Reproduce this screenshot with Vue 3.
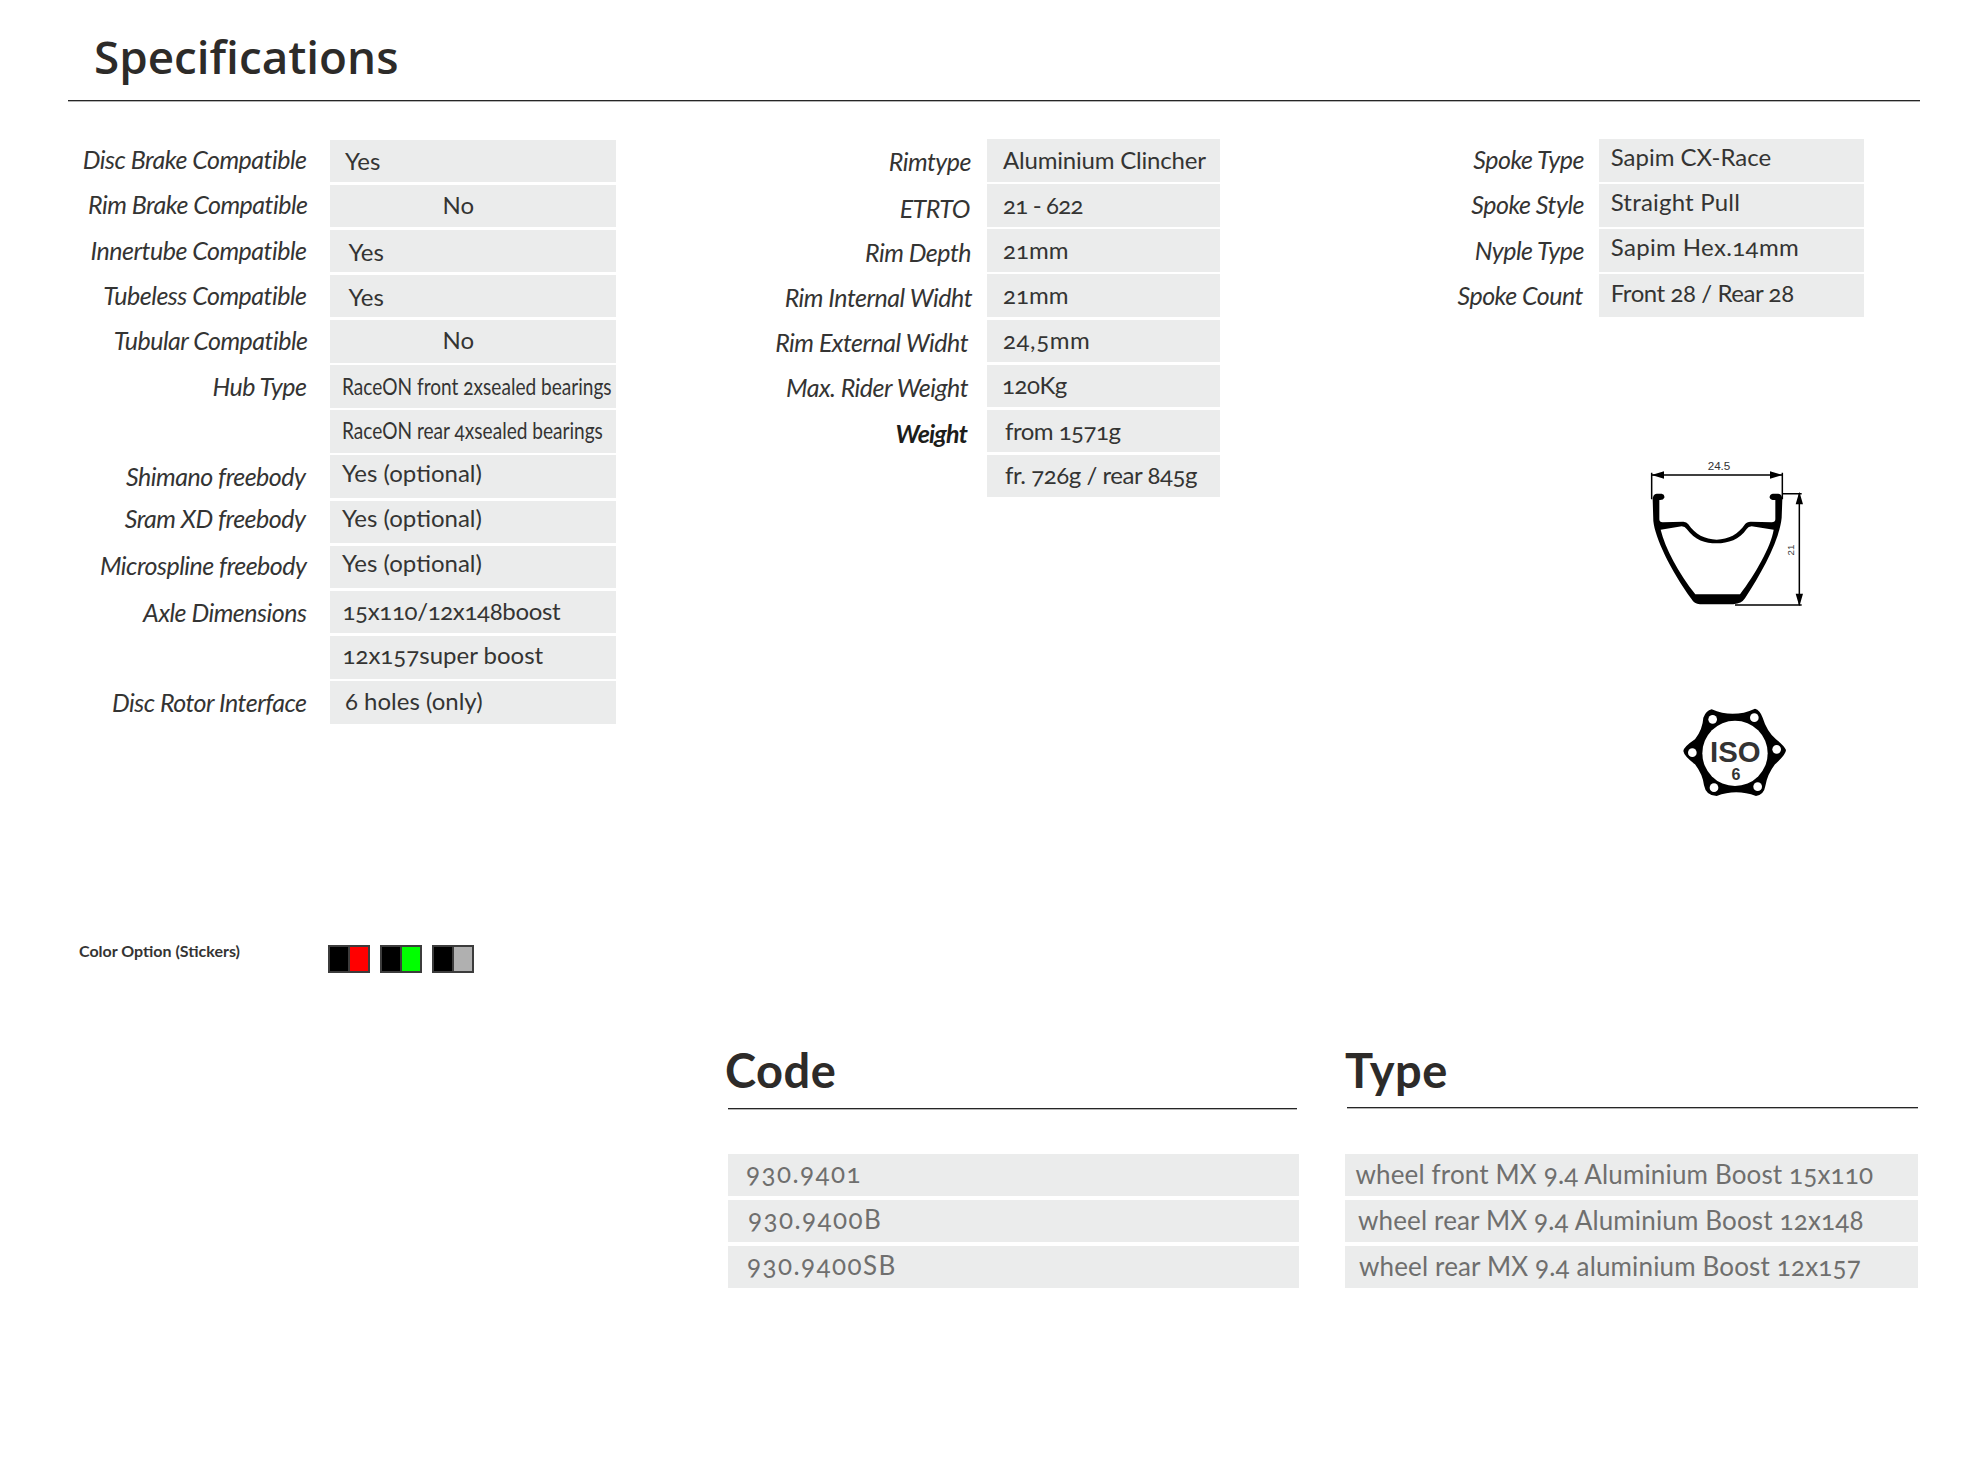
<script setup>
const pad = (b) => `${(b - 24.3).toFixed(1)}px`
const padLabel = (b) => `${(b - 24.7).toFixed(1)}px`
const left = [
  { l: 'Disc Brake Compatible', lb: 29.5, pr: 23, v: 'Yes', b: 30.5, pl: 15.5 },
  { l: 'Rim Brake Compatible', lb: 29, pr: 22, v: 'No', b: 30, pl: 113 },
  { l: 'Innertube Compatible', lb: 30, pr: 23, v: 'Yes', b: 31.7, pl: 19 },
  { l: 'Tubeless Compatible', lb: 30, pr: 23, v: 'Yes', b: 31, pl: 19 },
  { l: 'Tubular Compatible', lb: 29.7, pr: 22, v: 'No', b: 29.7, pl: 113 },
  { l: 'Hub Type', lb: 30.7, pr: 23, v: 'RaceON front 2xsealed bearings', b: 29.7, pl: 12.5, cond: true },
  { l: '', lb: 30, pr: 23, v: 'RaceON rear 4xsealed bearings', b: 29.3, pl: 12.5, cond: true },
  { l: 'Shimano freebody', lb: 30, pr: 24, v: 'Yes (optional)', b: 26.7, pl: 12.5 },
  { l: 'Sram XD freebody', lb: 26.7, pr: 24, v: 'Yes (optional)', b: 26.7, pl: 12.5 },
  { l: 'Microspline freebody', lb: 29, pr: 23, v: 'Yes (optional)', b: 26.7, pl: 12.5 },
  { l: 'Axle Dimensions', lb: 30.5, pr: 23, v: '15x110/12x148boost', b: 29.5, pl: 13, ls: -0.35 },
  { l: '', lb: 30, pr: 23, v: '12x157super boost', b: 28.3, pl: 13 },
  { l: 'Disc Rotor Interface', lb: 30.7, pr: 23, v: '6 holes (only)', b: 29, pl: 15.5 }
]
const middle = [
  { l: 'Rimtype', lb: 32, pr: 16, v: 'Aluminium Clincher', b: 30.3, pl: 16, ls: -0.2 },
  { l: 'ETRTO', lb: 33.2, pr: 17, v: '21 - 622', b: 30, pl: 16, ls: -0.8 },
  { l: 'Rim Depth', lb: 32, pr: 16, v: '21mm', b: 30, pl: 16 },
  { l: 'Rim Internal Widht', lb: 32.4, pr: 15, v: '21mm', b: 29.7, pl: 16 },
  { l: 'Rim External Widht', lb: 32, pr: 19, v: '24,5mm', b: 29.3, pl: 16, ls: 0.6 },
  { l: 'Max. Rider Weight', lb: 32.3, pr: 19, v: '120Kg', b: 30, pl: 15, ls: -0.5 },
  { l: 'Weight', lb: 33.2, pr: 20, v: 'from 1571g', b: 30.5, pl: 18, strong: true, ls: -0.5 },
  { l: '', lb: 30, pr: 20, v: 'fr. 726g / rear 845g', b: 29, pl: 18, ls: -0.45 }
]
const right = [
  { l: 'Spoke Type', lb: 29.3, pr: 15, v: 'Sapim CX-Race', b: 27.7, pl: 11.7 },
  { l: 'Spoke Style', lb: 29.6, pr: 15, v: 'Straight Pull', b: 27.3, pl: 11.7, ls: 0.2 },
  { l: 'Nyple Type', lb: 30, pr: 15, v: 'Sapim Hex.14mm', b: 26.7, pl: 11.7, ls: 0.36 },
  { l: 'Spoke Count', lb: 30, pr: 16, v: 'Front 28 / Rear 28', b: 28, pl: 11.7, ls: -0.42 }
]
const tables = [
  { cls: 'table-left', rows: left },
  { cls: 'table-middle', rows: middle },
  { cls: 'table-right', rows: right }
]
const swatches = ['#ff0000', '#00ff00', '#b0b0b0']
const codes = [
  { v: '930.9401', pl: 18 },
  { v: '930.9400B', pl: 20 },
  { v: '930.9400SB', pl: 19 }
]
const types = [
  { v: 'wheel front MX 9.4 Aluminium Boost 15x110', pl: 10.5 },
  { v: 'wheel rear MX 9.4 Aluminium Boost 12x148', pl: 13 },
  { v: 'wheel rear MX 9.4 aluminium Boost 12x157', pl: 14 }
]
</script>

<template>
  <div class="page">
    <header class="head">
      <h1>Specifications</h1>
    </header>

    <section class="specs">
      <div v-for="t in tables" :key="t.cls" class="table" :class="t.cls">
        <template v-for="(r, i) in t.rows" :key="i">
          <div class="label" :class="{ strong: r.strong }" :style="{ paddingTop: padLabel(r.lb), paddingRight: r.pr + 'px' }">{{ r.l }}</div>
          <div class="cell" :style="{ paddingTop: pad(r.b), paddingLeft: r.pl + 'px', letterSpacing: (r.ls || 0) + 'px' }">
            <span :class="{ cond: r.cond }">{{ r.v }}</span>
          </div>
        </template>
      </div>

      <div class="drawings">
        <svg class="rim" viewBox="0 0 600 510" width="200" height="170">
          <path fill="#000" fill-rule="evenodd" d="M98 145 Q98 130 110 128 L125 128 Q135 130 133 140 Q130 148 118 147 L118 205 Q118 214 128 214 L190 212 Q200 212 205 220 C225 250 255 266 290 266 C325 266 355 250 375 220 Q380 212 392 212 L455 214 Q466 214 466 205 L466 147 Q452 148 449 140 Q448 130 458 128 L475 128 Q487 130 487 145 L485 200 C478 270 425 365 375 442 Q365 458 340 460 L240 460 Q222 458 215 445 C150 355 105 260 100 210 Z M122 236 L185 226 Q195 226 200 234 C225 268 255 277 290 277 C325 277 358 266 380 234 Q385 226 395 226 L461 236 C452 290 405 370 360 430 L226 430 C175 365 135 290 122 236 Z" />
          <g stroke="#000" stroke-width="4.5" fill="none">
            <path d="M95 65 V145 M487 65 V145 M95 72 H487 M487 128 H545 M345 462 H545 M538 128 V462" />
          </g>
          <g fill="#000">
            <path d="M95 72 L132 61 V83 Z M487 72 L450 61 V83 Z M538 122 L527 160 H549 Z M538 466 L527 428 H549 Z" />
          </g>
          <text x="297" y="57" class="dim" font-size="35" text-anchor="middle">24.5</text>
          <text x="523" y="297" class="dim" font-size="29" text-anchor="middle" transform="rotate(-90 523 297)">21</text>
        </svg>
        <svg class="iso" viewBox="0 0 450 330" width="150" height="110">
          <path fill="#000" d="M155 40 Q220 68 285 38 Q300 42 308 65 Q320 105 348 130 Q372 148 378 162 Q378 175 345 205 Q322 235 316 270 Q312 296 288 300 Q228 278 170 300 Q138 300 132 268 Q128 235 105 205 Q72 180 70 165 Q72 152 105 130 Q128 100 130 65 Q138 44 155 40 Z" />
          <circle cx="225" cy="172" r="98" fill="#fff" />
          <g fill="#fff">
            <circle cx="158" cy="70" r="13" />
            <circle cx="283" cy="65" r="13" />
            <circle cx="350" cy="160" r="13" />
            <circle cx="293" cy="272" r="13" />
            <circle cx="162" cy="275" r="13" />
            <circle cx="97" cy="170" r="13" />
          </g>
          <text x="226" y="199" class="iso-text" font-size="88" text-anchor="middle">ISO</text>
          <text x="228" y="252" class="iso-text" font-size="48" text-anchor="middle">6</text>
        </svg>
      </div>
    </section>

    <section class="colors">
      <div class="colors-label">Color Option (Stickers)</div>
      <div class="swatches">
        <div v-for="c in swatches" :key="c" class="swatch">
          <span class="half black"></span>
          <span class="half" :style="{ background: c }"></span>
        </div>
      </div>
    </section>

    <section class="orders">
      <div class="order order-code">
        <h2>Code</h2>
        <div class="order-rows">
          <div v-for="c in codes" :key="c.v" class="order-row" :style="{ paddingLeft: c.pl + 'px' }">{{ c.v }}</div>
        </div>
      </div>
      <div class="order order-type">
        <h2>Type</h2>
        <div class="order-rows">
          <div v-for="c in types" :key="c.v" class="order-row" :style="{ paddingLeft: c.pl + 'px' }">{{ c.v }}</div>
        </div>
      </div>
    </section>
  </div>
</template>

<style>
html, body { margin: 0; background: #fff; }
</style>

<style scoped>
.page {
  width: 1988px;
  height: 1459px;
  box-sizing: border-box;
  overflow: hidden;
  font-family: "Lato", "Open Sans", sans-serif;
  font-variant-numeric: oldstyle-nums;
  color: #343433;
}
.head {
  margin: 0 68px;
  height: 100px;
  border-bottom: 1px solid #262626;
  box-shadow: 0 1px 0 #b5b5b5;
  padding-left: 26px;
}
h1 {
  margin: 0;
  padding-top: 26px;
  font-family: "Open Sans", sans-serif;
  font-size: 45.8px;
  line-height: 60px;
  font-weight: 600;
  color: #2d2b29;
}
.specs {
  display: grid;
  grid-template-columns: 616px 604px 644px;
  margin-top: 38px;
  height: 585px;
}
.table {
  display: grid;
  grid-auto-rows: 42.5px;
  row-gap: 2.65px;
  align-content: start;
  font-size: 24px;
  line-height: 30px;
}
.table-left { grid-template-columns: 1fr 286.5px; padding-top: 0.5px; }
.table-middle { grid-template-columns: 1fr 233px; }
.table-right { grid-template-columns: 1fr 265px; grid-row: 1; grid-column: 3; }
.label {
  font-size: 25px;
  font-style: italic;
  text-align: right;
  white-space: nowrap;
  box-sizing: border-box;
  letter-spacing: -0.5px;
}
.label.strong { font-weight: 700; color: #1d1d1b; letter-spacing: -0.8px; }
.cell {
  background: #ebecec;
  box-sizing: border-box;
  white-space: nowrap;
}
.cond {
  display: inline-block;
  transform: scaleX(0.795);
  transform-origin: left center;
}
.drawings {
  grid-row: 1;
  grid-column: 3;
  padding-top: 312px;
  padding-left: 400px;
  display: flex;
  flex-direction: column;
  align-items: flex-start;
}
.rim { display: block; }
.iso { display: block; margin-top: 75px; margin-left: 40px; }
.dim { font-family: "Liberation Sans", sans-serif; fill: #333; }
.iso-text { font-family: "Liberation Sans", sans-serif; font-weight: 700; fill: #333; }
.colors {
  display: flex;
  padding-left: 79px;
  margin-top: 221px;
  height: 28px;
}
.colors-label {
  width: 249px;
  font-size: 16px;
  line-height: 12.5px;
  font-weight: 700;
  white-space: nowrap;
}
.swatches { display: flex; gap: 10px; }
.swatch {
  display: flex;
  width: 42px;
  height: 28px;
  box-sizing: border-box;
  border: 2px solid #3c3c3c;
}
.half { flex: 1; }
.half + .half { border-left: 2px solid #3c3c3c; }
.black { background: #000; }
.orders {
  display: grid;
  grid-template-columns: 571px 573px;
  column-gap: 46px;
  padding-left: 728px;
  margin-top: 71px;
}
h2 {
  margin: 0;
  font-size: 47px;
  line-height: 52px;
  letter-spacing: 0.5px;
  font-weight: 700;
  color: #2d2b29;
  height: 64px;
  border-bottom: 1px solid #262626;
  box-shadow: 0 1px 0 #b5b5b5;
  margin-right: 2px;
}
.order-code h2 { text-indent: -3px; }
.order-type h2 { margin-left: 2px; margin-right: 0; text-indent: -2px; height: 63px; }
.order-rows {
  display: grid;
  grid-auto-rows: 42px;
  row-gap: 3.85px;
  margin-top: 45px;
}
.order-type .order-rows { margin-top: 46px; }
.order-row {
  background: #ebecec;
  color: #6f6f6e;
  font-size: 26px;
  line-height: 38.4px;
  white-space: nowrap;
}
.order-code .order-row { letter-spacing: 1.45px; }
.order-type .order-row { letter-spacing: 0.15px; line-height: 40.5px; }
</style>
